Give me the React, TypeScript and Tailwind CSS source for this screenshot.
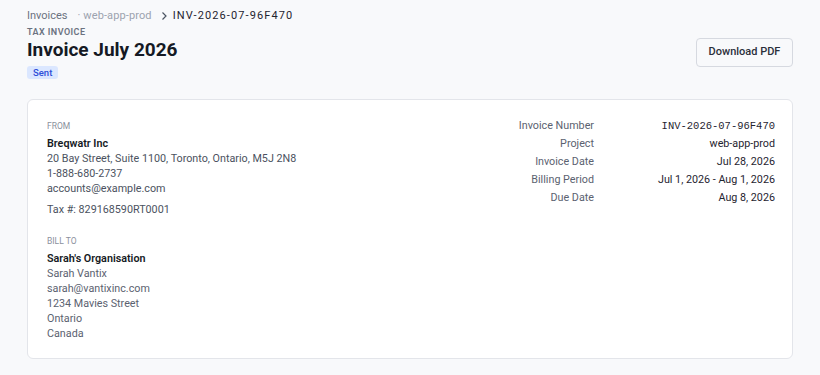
import React from 'react';

const details = [
  { label: 'Invoice Number', value: 'INV-2026-07-96F470', mono: true },
  { label: 'Project', value: 'web-app-prod' },
  { label: 'Invoice Date', value: 'Jul 28, 2026' },
  { label: 'Billing Period', value: 'Jul 1, 2026 - Aug 1, 2026' },
  { label: 'Due Date', value: 'Aug 8, 2026' },
];

export default function App() {
  return (
    <div className="min-h-screen bg-[#f8f9fb] px-[27px] pt-[9px] pb-4 text-[#1f2430]" style={{ fontFamily: 'Roboto, "Noto Sans", sans-serif' }}>
      <div className="flex items-center text-[11px] leading-[14px] h-[14px]">
        <span className="text-[#6b7280]">Invoices</span>
        <span className="ml-[10px] tracking-[0.01em] text-[#9ca3af]">· web-app-prod</span>
        <svg className="ml-[8px] mr-[5px]" width="8" height="10" viewBox="0 0 8 10" fill="none">
          <path d="M2.5 1.5 L6 5 L2.5 8.5" stroke="#4b5563" strokeWidth="1.2" />
        </svg>
        <span className="tracking-[0.1em] text-[#1f2430]">INV-2026-07-96F470</span>
      </div>

      <div className="flex items-start justify-between">
        <div className="flex flex-col items-start">
          <div className="mt-[3px] text-[9px] leading-[12px] font-semibold tracking-[0.05em] text-[#6b7280] uppercase">Tax Invoice</div>
          <h1 className="mt-0 text-[19px] leading-[24px] font-bold text-[#151a24]">Invoice July 2026</h1>
          <span className="mt-[4px] rounded-[3px] bg-[#dbe7ff] px-[6px] text-[9.5px] leading-[13px] font-medium text-[#2f4fd8]">Sent</span>
        </div>
        <button className="mt-[15px] h-[29px] w-[97px] rounded-[4px] border border-[#d6d9e0] bg-[#f8f9fb] text-[11px] font-medium text-[#2a2f3a]">
          Download PDF
        </button>
      </div>

      <div className="mt-[20px] flex justify-between rounded-[6px] border border-[#e3e5ea] bg-white pl-[19px] pr-[17px] pt-[20px] pb-[17px]">
        <div className="text-[10.75px] leading-[15px]">
          <div className="text-[8.5px] leading-[12px] uppercase text-[#8a909c]">From</div>
          <div className="mt-[4px] font-semibold text-[#151a24]">Breqwatr Inc</div>
          <div className="text-[#4b5260]">20 Bay Street, Suite 1100, Toronto, Ontario, M5J 2N8</div>
          <div className="text-[#4b5260]">1-888-680-2737</div>
          <div className="text-[#4b5260]">accounts@example.com</div>
          <div className="mt-[6px] text-[#4b5260]">Tax #: 829168590RT0001</div>

          <div className="mt-[18px] text-[8.5px] leading-[12px] uppercase text-[#8a909c]">Bill To</div>
          <div className="mt-[4px] font-semibold text-[#151a24]">Sarah's Organisation</div>
          <div className="text-[#5b6270]">Sarah Vantix</div>
          <div className="text-[#5b6270]">sarah@vantixinc.com</div>
          <div className="text-[#5b6270]">1234 Mavies Street</div>
          <div className="text-[#5b6270]">Ontario</div>
          <div className="text-[#5b6270]">Canada</div>
        </div>

        <div className="-mt-[3px] grid grid-cols-[auto_auto] gap-x-[64px] content-start text-[10.75px] leading-[18px]">
          {details.map((d) => (
            <React.Fragment key={d.label}>
              <div className="text-right text-[#5b6270]">{d.label}</div>
              <div
                className="text-right text-[#1f2430]"
                style={d.mono ? { fontFamily: '"Liberation Mono", "DejaVu Sans Mono", monospace', fontSize: '10.5px' } : undefined}
              >
                {d.value}
              </div>
            </React.Fragment>
          ))}
        </div>
      </div>
    </div>
  );
}
